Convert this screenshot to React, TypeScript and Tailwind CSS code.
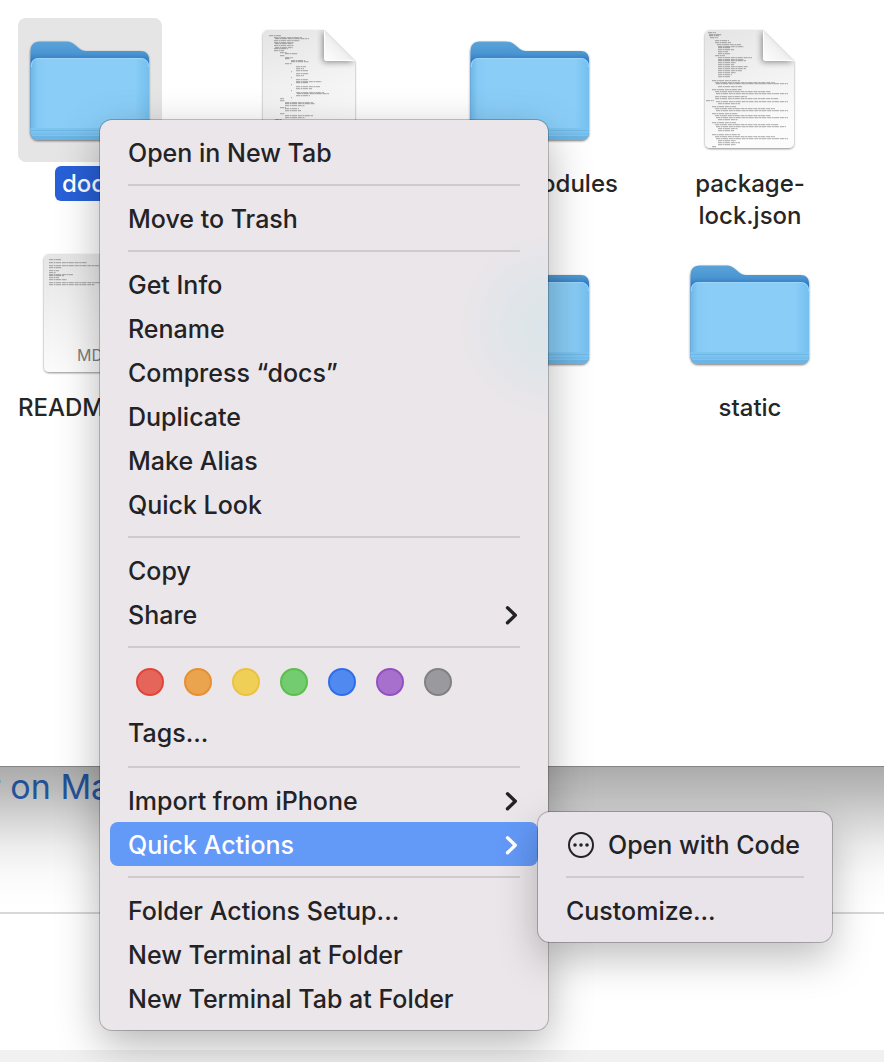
import React from "react";

type Line = [x: number, y: number, width: number];

const scriptLines: Line[] = [
  [6, 5, 12], [11, 7, 28], [12, 8, 34], [11, 10, 26], [11, 12, 20], [12, 13, 18], [11, 15, 20], [12, 17, 18], [11, 18, 14], [11, 20, 10],
  [17, 22, 7], [22, 23, 13], [17, 25, 5], [22, 27, 8], [22, 28, 5], [28, 30, 14], [28, 31, 18], [22, 33, 7],
  [33, 36, 10], [33, 38, 8], [33, 40, 12], [28, 41, 1], [33, 43, 13], [33, 45, 8], [28, 47, 1], [33, 49, 12], [33, 51, 26], [33, 52, 12],
  [28, 54, 1], [33, 56, 24], [33, 58, 16], [28, 60, 1], [33, 62, 28], [34, 63, 32], [33, 65, 14], [28, 67, 1],
  [17, 68, 4], [17, 70, 5], [22, 72, 28], [22, 73, 30], [22, 75, 20], [17, 77, 6], [22, 78, 14], [22, 80, 16], [17, 83, 5], [22, 85, 28], [22, 87, 20], [12, 89, 7],
];

const lockLines: Line[] = [
  [3, 2, 8], [4, 4, 13], [4, 5, 10], [5, 7, 8], [10, 10, 14], [10, 12, 16], [12, 14, 24], [13, 16, 26], [13, 17, 13], [13, 19, 16], [13, 21, 10], [13, 23, 12],
  [10, 25, 10], [13, 27, 34], [13, 29, 26], [13, 30, 28], [13, 32, 18], [13, 34, 16], [13, 36, 30], [13, 38, 28], [13, 40, 24], [13, 42, 18], [13, 44, 14], [13, 46, 12],
  [7, 50, 28], [10, 52, 60], [11, 53, 72], [13, 56, 24], [7, 59, 30], [10, 61, 56], [11, 63, 72], [10, 66, 32], [10, 68, 64], [1, 70, 8], [11, 71, 72], [13, 73, 22],
  [7, 76, 24], [10, 78, 60], [11, 80, 72], [7, 83, 26], [10, 85, 56], [11, 87, 72], [13, 89, 20],
  [7, 92, 24], [10, 94, 64], [11, 96, 70], [13, 98, 20], [13, 100, 16], [7, 104, 28], [10, 106, 60], [11, 108, 72], [13, 110, 18], [13, 112, 22], [13, 114, 18], [7, 116, 4],
];

const readmeLines: Line[] = [
  [5, 5, 12], [5, 8, 38], [5, 11, 50], [5, 13, 13], [5, 16, 10], [5, 18, 7], [5, 20, 24], [5, 21, 15], [5, 23, 10], [5, 25, 18], [5, 28, 56], [5, 30, 46],
];

function FolderIcon({ id }: { id: string }) {
  return (
    <svg viewBox="0.5 0 144 144" className="size-36" aria-hidden="true">
      <defs>
        <linearGradient id={`${id}-back`} x1="0" y1="0" x2="0" y2="1">
          <stop offset="0" stopColor="#5ba3d8" />
          <stop offset="0.12" stopColor="#4a96d2" />
          <stop offset="0.2" stopColor="#2f78c2" />
          <stop offset="1" stopColor="#2f78c2" />
        </linearGradient>
        <linearGradient id={`${id}-side`} x1="0" y1="0" x2="1" y2="0">
          <stop offset="0" stopColor="#6cb6e6" />
          <stop offset="0.06" stopColor="#85caf5" />
          <stop offset="0.15" stopColor="#8acef8" />
          <stop offset="0.88" stopColor="#8acef8" />
          <stop offset="1" stopColor="#74bfee" />
        </linearGradient>
        <filter id={`${id}-shadow`} x="-10%" y="-10%" width="120%" height="125%">
          <feDropShadow dx="0" dy="1" stdDeviation="1" floodColor="#222222" floodOpacity="0.6" />
        </filter>
      </defs>
      <g filter={`url(#${id}-shadow)`}>
        <path
          d="M13 34c0-7 3-10.500 9-10.500h26c6 0 8 2 12 5.500 3.500 3 5 4 10 4h53c5.500 0 8.500 3 8.500 9v71c0 6-3 9-9 9H22c-6 0-9-3-9-9Z"
          fill={`url(#${id}-back)`}
        />
        <rect x="13" y="40" width="118.500" height="82" rx="8" fill={`url(#${id}-side)`} />
      </g>
      <path d="M14 49c0-6 2-8.500 8-8.500h100c6 0 9 2.500 9 8.500" fill="none" stroke="#a3dafb" strokeWidth="1" opacity="0.8" />
      <path d="M13 110h118.500v3a9 9 0 0 1-9 9H22a9 9 0 0 1-9-9Z" fill="#7cc4f0" />
      <path d="M13 112.500h118.500M13 116h118.500" stroke="#6fb7e5" strokeWidth="1" />
      <path d="M14 118h117c-1.500 3-4 4-8 4H22c-4 0-6.500-1-8-4Z" fill="#6ab5e5" />
    </svg>
  );
}

function DocumentIcon({ id, lines, left, width, badge }: { id: string; lines: Line[]; left: number; width: number; badge?: string }) {
  const fold = width - 31;
  const outline = `M5 0H${fold}L${width} 31V113a5 5 0 0 1-5 5H5a5 5 0 0 1-5-5V5a5 5 0 0 1 5-5Z`;
  return (
    <svg viewBox="0 0 144 144" className="size-36" aria-hidden="true">
      <defs>
        <linearGradient id={`${id}-page`} x1="0" y1="0" x2="0.3" y2="1">
          <stop offset="0" stopColor="#e4e4e4" />
          <stop offset="0.5" stopColor="#f1f1f1" />
          <stop offset="1" stopColor="#fcfcfc" />
        </linearGradient>
        <linearGradient id={`${id}-ear`} x1="0" y1="1" x2="0.6" y2="0.400">
          <stop offset="0" stopColor="#ffffff" />
          <stop offset="0.7" stopColor="#f1f1f1" />
          <stop offset="1" stopColor="#dddddd" />
        </linearGradient>
        <filter id={`${id}-shadow`} x="-10%" y="-10%" width="120%" height="120%">
          <feDropShadow dx="0" dy="1" stdDeviation="1.200" floodColor="#000000" floodOpacity="0.45" />
        </filter>
        <filter id={`${id}-earshadow`} x="-50%" y="-50%" width="200%" height="200%">
          <feGaussianBlur stdDeviation="3" />
        </filter>
        <clipPath id={`${id}-clip`}>
          <path d={outline} />
        </clipPath>
      </defs>
      <g transform={`translate(${left} 12)`}>
        <path d={outline} fill={`url(#${id}-page)`} filter={`url(#${id}-shadow)`} />
        <g clipPath={`url(#${id}-clip)`}>
          <path d={`M${fold - 1} 0V32H${width}Z`} fill="#000000" opacity="0.45" filter={`url(#${id}-earshadow)`} />
          {lines.map(([x, y, w], i) => (
            <path key={i} d={`M${x} ${y + 0.7}h${w}`} stroke="#555555" strokeWidth="1" strokeDasharray="4 0.6 2 0.4 5 0.8" opacity="0.5" />
          ))}
        </g>
        <path d={`M${fold} 0V28a3 3 0 0 0 3 3H${width}Z`} fill={`url(#${id}-ear)`} />
        <path d={`M${fold + 0.5} 1V28a2.500 2.500 0 0 0 2.500 2.500H${width - 1}`} fill="none" stroke="#ffffff" strokeWidth="1" />
        {badge && (
          <text x={width / 2} y="107" textAnchor="middle" fontSize="16" fill="#808080" fontFamily="Inter, sans-serif">
            {badge}
          </text>
        )}
      </g>
    </svg>
  );
}

function FileItem({ label, selected, children }: { label: string; selected?: boolean; children: React.ReactNode }) {
  return (
    <button type="button" className="flex flex-col items-center">
      <span className={selected ? "rounded-lg bg-[#e5e5e5]" : "rounded-lg"}>{children}</span>
      <span className="mt-1.5 block w-40 text-center text-[24px] leading-8 font-[450]">
        <span className={selected ? "rounded-md bg-[#2860d8] px-[7px] pt-[3px] pb-[3px] text-white" : ""}>{label}</span>
      </span>
    </button>
  );
}

function Chevron() {
  return (
    <svg viewBox="0 0 14 22" className="mr-[1px] h-[22px] w-[14px]" fill="none" stroke="currentColor" strokeWidth="3.400" strokeLinecap="round" strokeLinejoin="round" aria-hidden="true">
      <path d="M2.500 3.800l7.800 7.400L2.500 18.800" />
    </svg>
  );
}

function MenuItem({ label, submenu, active, icon }: { label: string; submenu?: boolean; active?: boolean; icon?: React.ReactNode }) {
  return (
    <button
      type="button"
      role="menuitem"
      aria-haspopup={submenu ? "menu" : undefined}
      className={
        active
          ? "flex h-11 w-full items-center rounded-lg bg-[#6399f7] px-[18px] pt-[2px] text-left whitespace-nowrap text-white"
          : "flex h-11 w-full items-center rounded-lg px-[18px] pt-[2px] text-left whitespace-nowrap"
      }
    >
      {icon}
      <span className="flex-1 pt-[2px]">{label}</span>
      {submenu && <Chevron />}
    </button>
  );
}

function Separator() {
  return <div role="separator" className="mx-[18px] my-[10px] h-[2px] bg-[#cfcace]" />;
}

const tagColors = [
  { name: "Red", style: "border-[#e1453a] bg-[#e5655a]" },
  { name: "Orange", style: "border-[#e68f33] bg-[#eaa44e]" },
  { name: "Yellow", style: "border-[#ecc340] bg-[#efcf56]" },
  { name: "Green", style: "border-[#5bbf4c] bg-[#74cc70]" },
  { name: "Blue", style: "border-[#2f6eea] bg-[#5089f0]" },
  { name: "Purple", style: "border-[#9450c0] bg-[#a770cc]" },
  { name: "Gray", style: "border-[#808085] bg-[#9a999e]" },
];

function ContextMenu() {
  return (
    <div
      role="menu"
      aria-label="Folder actions"
      className="absolute top-[120px] left-[100px] w-[448px] rounded-xl bg-[#ebe6ea] bg-[radial-gradient(circle_at_450px_205px,#dbe5e9_0,#e0e5e9_40px,#ebe6ea_96px)] p-[10px] text-[25px] font-[450] text-[#232225] shadow-[0_0_0_1px_rgba(0,0,0,0.22),0_14px_44px_rgba(0,0,0,0.3)]"
    >
      <MenuItem label="Open in New Tab" />
      <Separator />
      <MenuItem label="Move to Trash" />
      <Separator />
      <MenuItem label="Get Info" />
      <MenuItem label="Rename" />
      <MenuItem label="Compress “docs”" />
      <MenuItem label="Duplicate" />
      <MenuItem label="Make Alias" />
      <MenuItem label="Quick Look" />
      <Separator />
      <MenuItem label="Copy" />
      <MenuItem label="Share" submenu />
      <Separator />
      <div className="flex h-[52px] gap-5 px-[26px] pt-[10px]">
        {tagColors.map((tag) => (
          <button key={tag.name} type="button" aria-label={tag.name} className={`size-7 rounded-full border-2 ${tag.style}`} />
        ))}
      </div>
      <div className="pb-[2px]">
        <MenuItem label="Tags..." />
      </div>
      <Separator />
      <MenuItem label="Import from iPhone" submenu />
      <MenuItem label="Quick Actions" submenu active />
      <Separator />
      <MenuItem label="Folder Actions Setup..." />
      <MenuItem label="New Terminal at Folder" />
      <MenuItem label="New Terminal Tab at Folder" />

      <div
        role="menu"
        aria-label="Quick Actions"
        className="absolute top-[692px] left-[438px] w-[294px] rounded-xl bg-[#e8e4e9] p-[10px] shadow-[0_0_0_1px_rgba(0,0,0,0.24),0_16px_40px_rgba(0,0,0,0.26)]"
      >
        <MenuItem
          label="Open with Code"
          icon={
            <svg viewBox="0 0 28 28" className="mr-[13px] ml-[1px] size-7 shrink-0" fill="none" aria-hidden="true">
              <circle cx="14" cy="14" r="12" stroke="currentColor" strokeWidth="2" />
              <circle cx="8" cy="14" r="1.800" fill="currentColor" />
              <circle cx="14" cy="14" r="1.800" fill="currentColor" />
              <circle cx="20" cy="14" r="1.800" fill="currentColor" />
            </svg>
          }
        />
        <Separator />
        <MenuItem label="Customize..." />
      </div>
    </div>
  );
}

export default function App() {
  return (
    <div className="relative flex min-h-screen flex-col overflow-hidden bg-white font-['Inter','Liberation_Sans',sans-serif]">
      <main className="h-[767px] shrink-0 border-b border-[#858585] bg-white pt-[18px] text-[#262626]">
        <div className="-mx-5 grid auto-rows-[224px] grid-cols-[repeat(auto-fill,220px)] items-start">
          <FileItem label="docs" selected>
            <FolderIcon id="docs" />
          </FileItem>
          <FileItem label="">
            <DocumentIcon id="script" lines={scriptLines} left={25} width={92} />
          </FileItem>
          <FileItem label="node_modules">
            <FolderIcon id="modules" />
          </FileItem>
          <FileItem label="package-lock.json">
            <DocumentIcon id="lock" lines={lockLines} left={27} width={89} />
          </FileItem>
          <FileItem label="README.md">
            <DocumentIcon id="readme" lines={readmeLines} left={26} width={92} badge="MD" />
          </FileItem>
          <div />
          <FileItem label="">
            <FolderIcon id="hidden" />
          </FileItem>
          <FileItem label="static">
            <FolderIcon id="static" />
          </FileItem>
        </div>
      </main>

      <section className="relative flex-1">
        <div className="h-[147px] border-b-2 border-[#d8d8d8]">
          <a href="#mac" className="-ml-3 block text-[34px] leading-10 whitespace-nowrap text-[#3070d0]">
            r on Mac
          </a>
        </div>
        <div className="pointer-events-none absolute inset-x-0 top-0 h-[140px] bg-[linear-gradient(to_bottom,rgba(0,0,0,0.33)_0px,rgba(0,0,0,0.26)_25px,rgba(0,0,0,0.17)_50px,rgba(0,0,0,0.07)_80px,rgba(0,0,0,0.02)_108px,transparent_140px)]" />
      </section>
      <footer className="h-3 bg-[#f1f1f1]" />

      <ContextMenu />
    </div>
  );
}
